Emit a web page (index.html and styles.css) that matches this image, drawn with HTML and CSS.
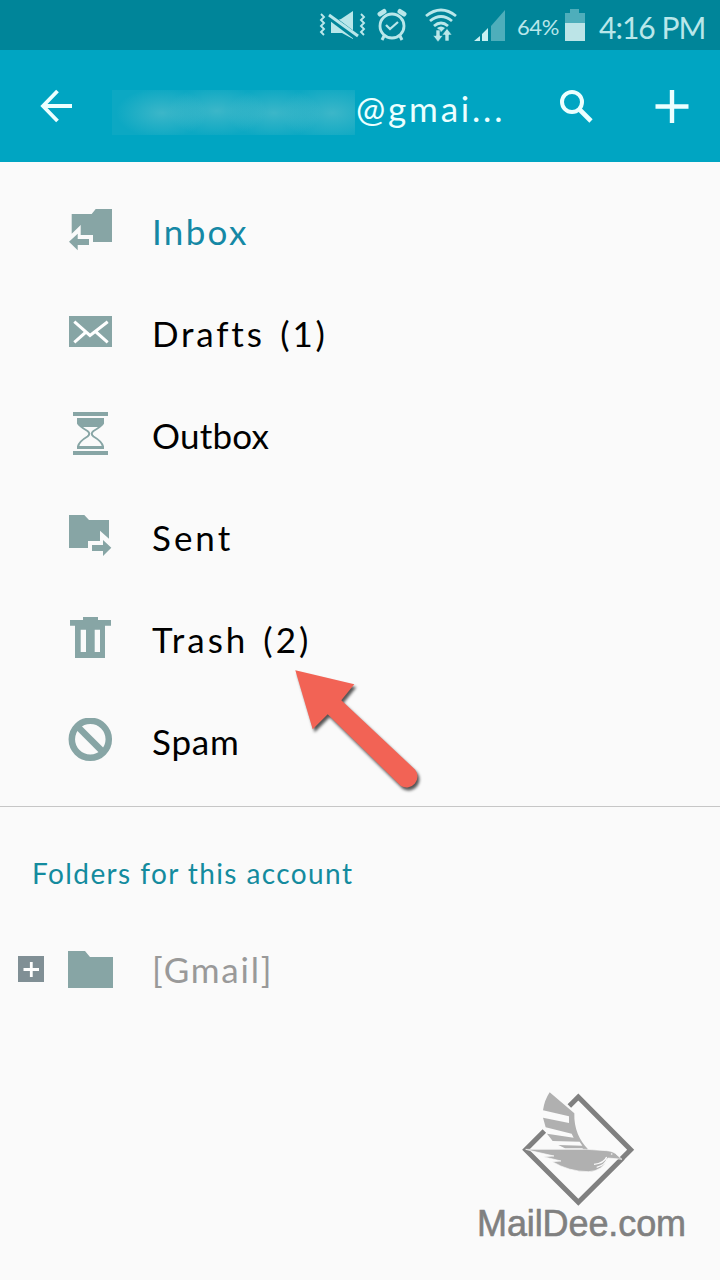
FILE: index.html
```html
<!DOCTYPE html>
<html lang="en">
  <head>
    <meta charset="UTF-8" />
    <title>Mail folders</title>
    <meta name="viewport" content="width=device-width, initial-scale=1" />
    <link rel="stylesheet" href="styles.css">
  </head>
  <body>
    <div class="status-bar">
      <svg class="status-vibrate" width="48" height="34" viewBox="0 0 48 34" fill="#b9e7ea">
        <path d="M2 6l3 3-3 3 3 3-3 3 3 3-3 3 3 3M42 6l3 3-3 3 3 3-3 3 3 3-3 3 3 3" fill="none" stroke="#b9e7ea" stroke-width="1.9" />
        <path d="M12 12v13h11l11 6V3L22 11l-3 1z" />
        <path d="M9 7.500l32 24" stroke="#008599" stroke-width="6.500" />
        <path d="M10 7l29 21" stroke="#b9e7ea" stroke-width="3" />
      </svg>
      <svg class="status-alarm" width="30" height="34" viewBox="0 0 30 34" fill="none" stroke="#b9e7ea">
        <circle cx="15" cy="18" r="12" stroke-width="2.8" />
        <path d="M9 17l4 4 8-7" stroke-width="2.3" />
        <path d="M3 6l4-2.500M27 6l-4-2.500" stroke-width="5" stroke-linecap="round" />
        <path d="M7 28l-2 4M23 28l2 4" stroke-width="3" />
      </svg>
      <svg class="status-wifi" width="34" height="36" viewBox="0 0 34 36" fill="none" stroke="#b9e7ea" stroke-width="2.8">
        <path d="M2 9q15-12 30 0M6 14q11-9 22 0M10 19q7-6 14 0" />
        <path d="M13 21q4-3 8 0l-4 4z" fill="#b9e7ea" stroke="none" />
        <path d="M9 28.500h3V23h4v5.500h3L14 35zM18 28l5-6.500 5 6.500h-3v6h-4v-6z" fill="#b9e7ea" stroke="#008599" stroke-width=".6" />
      </svg>
      <svg class="status-signal" width="32" height="32" viewBox="0 0 32 32">
        <path d="M0 32l6-5v5zM8 25l6-6v13H8z" fill="#c8f0f2" />
        <path d="M17 17L31 1v31H17z" fill="#4eaebb" />
      </svg>
      <span class="percent">64%</span>
      <svg class="status-battery" width="20" height="32" viewBox="0 0 20 32">
        <path d="M0 4h5V0h9v4h6v11H0z" fill="#4eaebb" />
        <path d="M0 14h20v18H0z" fill="#bce4e7" />
      </svg>
      <span class="clock">4:16 PM</span>
    </div>

    <header class="toolbar">
      <svg class="back" width="34" height="34" viewBox="0 0 34 34" fill="none" stroke="#ecffff" stroke-width="3.8">
        <path d="M18.500 2L4 17l14.500 15M4 17h29" />
      </svg>
      <div class="masked"></div>
      <h1 class="account">@gmai...</h1>
      <svg class="search" width="34" height="34" viewBox="0 0 34 34" fill="none" stroke="#ecffff">
        <circle cx="13" cy="13" r="10" stroke-width="4" />
        <path d="M20 20l12 12" stroke-width="4.6" />
      </svg>
      <svg width="34" height="34" viewBox="0 0 34 34" fill="none" stroke="#ecffff" stroke-width="4.4">
        <path d="M.5 17.5h33M17 1v33" />
      </svg>
    </header>

    <ul class="folders">
      <li class="active">
        <svg class="icon" viewBox="0 0 48 48">
          <path d="M5.7 6h20l4-5H46v33H27v-7H14.7V17l-9 8.7z" />
          <path d="M3 33.7l8.7-8V31H23v6H11.7v5.3z" />
        </svg>
        <span class="name inbox">Inbox</span>
      </li>
      <li>
        <svg class="icon" viewBox="0 0 48 48">
          <path d="M3 6h43v31H3z" />
          <path class="cut" d="M8.3 11.7L24 25.5l17.7-13.8M8.3 32.3L20 22M41.7 32.3L30 22" />
        </svg>
        <span class="name drafts">Drafts (1)</span>
      </li>
      <li>
        <svg class="icon" viewBox="0 0 48 48">
          <path d="M7 0h35v4H7zM7 39h35v4H7z" />
          <path class="glass" d="M12 7v4q1 3 9.500 8 3.500 2.500 0 5.500-8.500 5-9.500 10V36h25v-1.500q-1-5-9.500-10-3.500-3 0-5.500 8.500-5 9.500-8V7z" />
          <path d="M11 6h27v5q-1 3-5 4H16q-4-1-5-4zM11 34h27v3H11z" />
        </svg>
        <span class="name outbox">Outbox</span>
      </li>
      <li>
        <svg class="icon" viewBox="0 0 48 48">
          <path d="M3 1h15.300l4.700 5h20v18.700l-9-8V27H22v7H3z" />
          <path d="M26 31h11v-5l8.300 7.700L37 42v-5H26z" />
        </svg>
        <span class="name sent">Sent</span>
      </li>
      <li>
        <svg class="icon" viewBox="0 0 48 48">
          <path fill-rule="evenodd" d="M4 4h13V1h15v3h13v5.700h-6V42H9V9.700H4zM14.700 13.700V36H20V13.700zM28.700 13.700V36H34V13.700z" />
        </svg>
        <span class="name trash">Trash (2)</span>
      </li>
      <li>
        <svg class="icon" viewBox="0 0 48 48">
          <circle class="ring" cx="24.300" cy="21.300" r="18.500" />
          <path class="ring" d="M11 8l26.600 26.600" />
        </svg>
        <span class="name spam">Spam</span>
      </li>
    </ul>

    <h2 class="section-title">Folders for this account</h2>
    <div class="subfolder">
      <svg class="expand" width="26" height="26" viewBox="0 0 26 26">
        <path d="M0 0h26v26H0z" fill="#808f95" />
        <path d="M5.500 13.500h15.500M13.300 6v15" stroke="#fff" stroke-width="2.800" />
      </svg>
      <svg class="folder" width="45" height="37" viewBox="0 0 45 37">
        <path d="M0 0h17l5 6h23v31H0z" fill="#87a5a5" />
      </svg>
      <span class="name gmail">[Gmail]</span>
    </div>

    <!-- Pointer over the trash row -->
    <svg class="pointer" width="160" height="160" viewBox="0 0 160 160">
      <path d="M15.300 20.300l59 14-13 16L135 119.500a11 11 0 0 1-14 16.500L47.700 64.300l-15 15z" fill="#f26355" />
    </svg>

    <div class="watermark">
      <svg class="logo" width="125" height="125" viewBox="0 0 375 375">
        <path d="M163 63l27-27 157 158-27 27M88 138l-56 56 158 158 134-134" fill="none" stroke="#808080" stroke-width="15" />
        <g fill="#b0b0b0">
          <path d="M104 22l74 63q-2 66 44 111h-14l-6-6h-52l-20-10 72 2-8-12-81-2-17-22 80 12-6-12-78-19-8-29 78 16V94L84 76q4-30 20-54z" />
          <path d="M32 193h183l60 4q23 2 31 13l15 13-42-4q-16 40-59 41-58 0-108-30l26-2-53-13 32-2-75-17z" stroke="#fafafa" stroke-width="2" />
        </g>
        <path d="M237 238q30-3 38-22M245 247q26-7 32-26" fill="none" stroke="#fafafa" stroke-width="4" />
        <circle cx="290" cy="207" r="2.500" fill="#fafafa" />
      </svg>
      <span>MailDee.com</span>
    </div>
  </body>
</html>
```
FILE: styles.css
```css
* {
  box-sizing: border-box;
}
body {
  position: relative;
  width: 720px;
  height: 1280px;
  margin: 0;
  overflow: hidden;
  background: #fafafa;
  color: #000;
  font-family: Lato, sans-serif;
}
svg {
  display: block;
  flex: none;
}
.status-bar {
  display: flex;
  align-items: center;
  height: 50px;
  padding-left: 319px;
  background: #008599;
  color: #b9e7ea;
  white-space: nowrap;
}
.status-alarm {
  margin-left: 10px;
}
.status-wifi {
  margin-left: 17px;
}
.status-signal {
  margin-left: 16px;
}
.percent {
  width: 41px;
  margin-left: 11px;
  padding-top: 2px;
  font-size: 22px;
  letter-spacing: -0.4px;
}
.status-battery {
  margin-left: 7px;
}
.clock {
  margin-left: 14px;
  padding-top: 3px;
  font-size: 30px;
  letter-spacing: -1px;
}
.toolbar {
  display: flex;
  align-items: center;
  height: 112px;
  padding-left: 39px;
  background: #00a5c2;
  color: #ecffff;
}
.masked {
  width: 243px;
  height: 45px;
  margin: 13px 0 0 39px;
  background:
    radial-gradient(ellipse 46px 25px at 50px 23px, #5cc0cc99, transparent),
    radial-gradient(ellipse 50px 25px at 105px 21px, #5cc0cc99, transparent),
    radial-gradient(ellipse 48px 25px at 162px 23px, #5cc0cc99, transparent),
    radial-gradient(ellipse 52px 28px at 220px 23px, #5cc0cc99, transparent),
    #0ca8c3;
}
.account {
  width: 148px;
  margin: 4px 0 0 1px;
  font-size: 35px;
  font-weight: 400;
  letter-spacing: 2.8px;
  white-space: nowrap;
}
.search {
  margin: 0 62px 0 55px;
}
.folders {
  margin: 0;
  padding: 19px 0 13px;
  list-style: none;
  border-bottom: 1px solid #c6c6c6;
}
.folders li {
  display: flex;
  align-items: center;
  height: 102px;
  padding-left: 66px;
}
.active {
  color: #1588a5;
}
.icon {
  width: 48px;
  height: 48px;
  margin-right: 38px;
  fill: #87a5a5;
}
.icon .cut {
  fill: none;
  stroke: #fff;
  stroke-width: 3;
}
.icon .glass {
  fill: none;
  stroke: #87a5a5;
  stroke-width: 2;
}
.icon .ring {
  fill: none;
  stroke: #87a5a5;
  stroke-width: 6.5;
}
.name {
  padding-bottom: 3px;
  font-size: 35px;
  line-height: 48px;
  white-space: nowrap;
}
.inbox {
  letter-spacing: 2.3px;
}
.drafts {
  letter-spacing: 2.8px;
  word-spacing: 4px;
}
.outbox {
  letter-spacing: 0.2px;
}
.sent {
  letter-spacing: 3px;
}
.trash {
  letter-spacing: 3px;
  word-spacing: 3px;
}
.spam {
  letter-spacing: 0.8px;
}
.section-title {
  margin: 47px 0 0 32px;
  color: #148b9e;
  font-size: 28px;
  font-weight: 400;
  letter-spacing: 1.4px;
  line-height: 38px;
}
.subfolder {
  display: flex;
  align-items: center;
  height: 102px;
  margin-top: 26px;
  padding-left: 18px;
}
.folder {
  margin: 0 39px 0 24px;
}
.gmail {
  padding-bottom: 0;
  color: #999;
  letter-spacing: 1.8px;
}
.pointer {
  position: absolute;
  top: 650px;
  left: 280px;
  filter: drop-shadow(2px 3px 1.5px #555);
}
.watermark {
  position: absolute;
  top: 1085px;
  left: 460px;
  width: 240px;
  color: #808080;
  font-family: "Liberation Sans", Arial, sans-serif;
  font-size: 36px;
}
.logo {
  margin-left: 55px;
}
.watermark span {
  display: block;
  margin-top: -7px;
  padding-left: 17px;
  letter-spacing: -0.1px;
  line-height: 42px;
  -webkit-text-stroke: 0.6px #808080;
}
```
